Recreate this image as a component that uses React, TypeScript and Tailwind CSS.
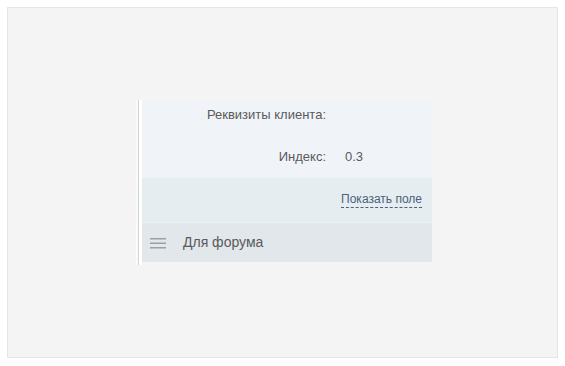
import React from "react";

export default function App() {
  return (
    <div
      className="w-[565px] h-[366px] bg-white p-[7px]"
      style={{ fontFamily: '"Liberation Sans", Arial, sans-serif' }}
    >
      <div className="w-[551px] h-[351px] bg-[#f4f4f4] border border-[#e6e6e6] pt-[92px] pl-[128px]">
        <div className="flex w-[296px] h-[165px]">
          <div className="w-[2px] bg-[#fafafa]" />
          <div className="w-px bg-[#d4d4d4]" />
          <div className="w-[3px] bg-white" />
          <div className="flex flex-col w-[290px] self-start">
            <div className="h-[78px] bg-[#f0f4f8] flex flex-col text-[13px] text-[#5a5a5a]">
              <div className="flex h-[30px] items-center">
                <div className="w-[184px] text-right">Реквизиты клиента:</div>
              </div>
              <div className="flex h-[24px] items-center mt-[15px]">
                <div className="w-[184px] text-right">Индекс:</div>
                <div className="ml-[19px] text-[13px]">0.3</div>
              </div>
            </div>
            <div className="h-[44px] bg-[#e6edf0] flex items-center justify-end pr-[10px]">
              <span className="text-[12px] text-[#4c607c] border-b border-dashed border-[#4c607c] leading-[15px]">
                Показать поле
              </span>
            </div>
            <div className="h-px bg-[#eef2f4]" />
            <div className="h-[39px] bg-[#e1e7ea] flex items-center pl-[8px]">
              <svg width="16" height="12" viewBox="0 0 16 12" className="mr-[17px]">
                <rect x="0" y="1" width="16" height="1.5" fill="#9aa0a4" />
                <rect x="0" y="5.5" width="16" height="1.5" fill="#9aa0a4" />
                <rect x="0" y="10" width="16" height="1.5" fill="#9aa0a4" />
              </svg>
              <span className="text-[14px] text-[#5a5a5a]">Для форума</span>
            </div>
          </div>
        </div>
      </div>
    </div>
  );
}
